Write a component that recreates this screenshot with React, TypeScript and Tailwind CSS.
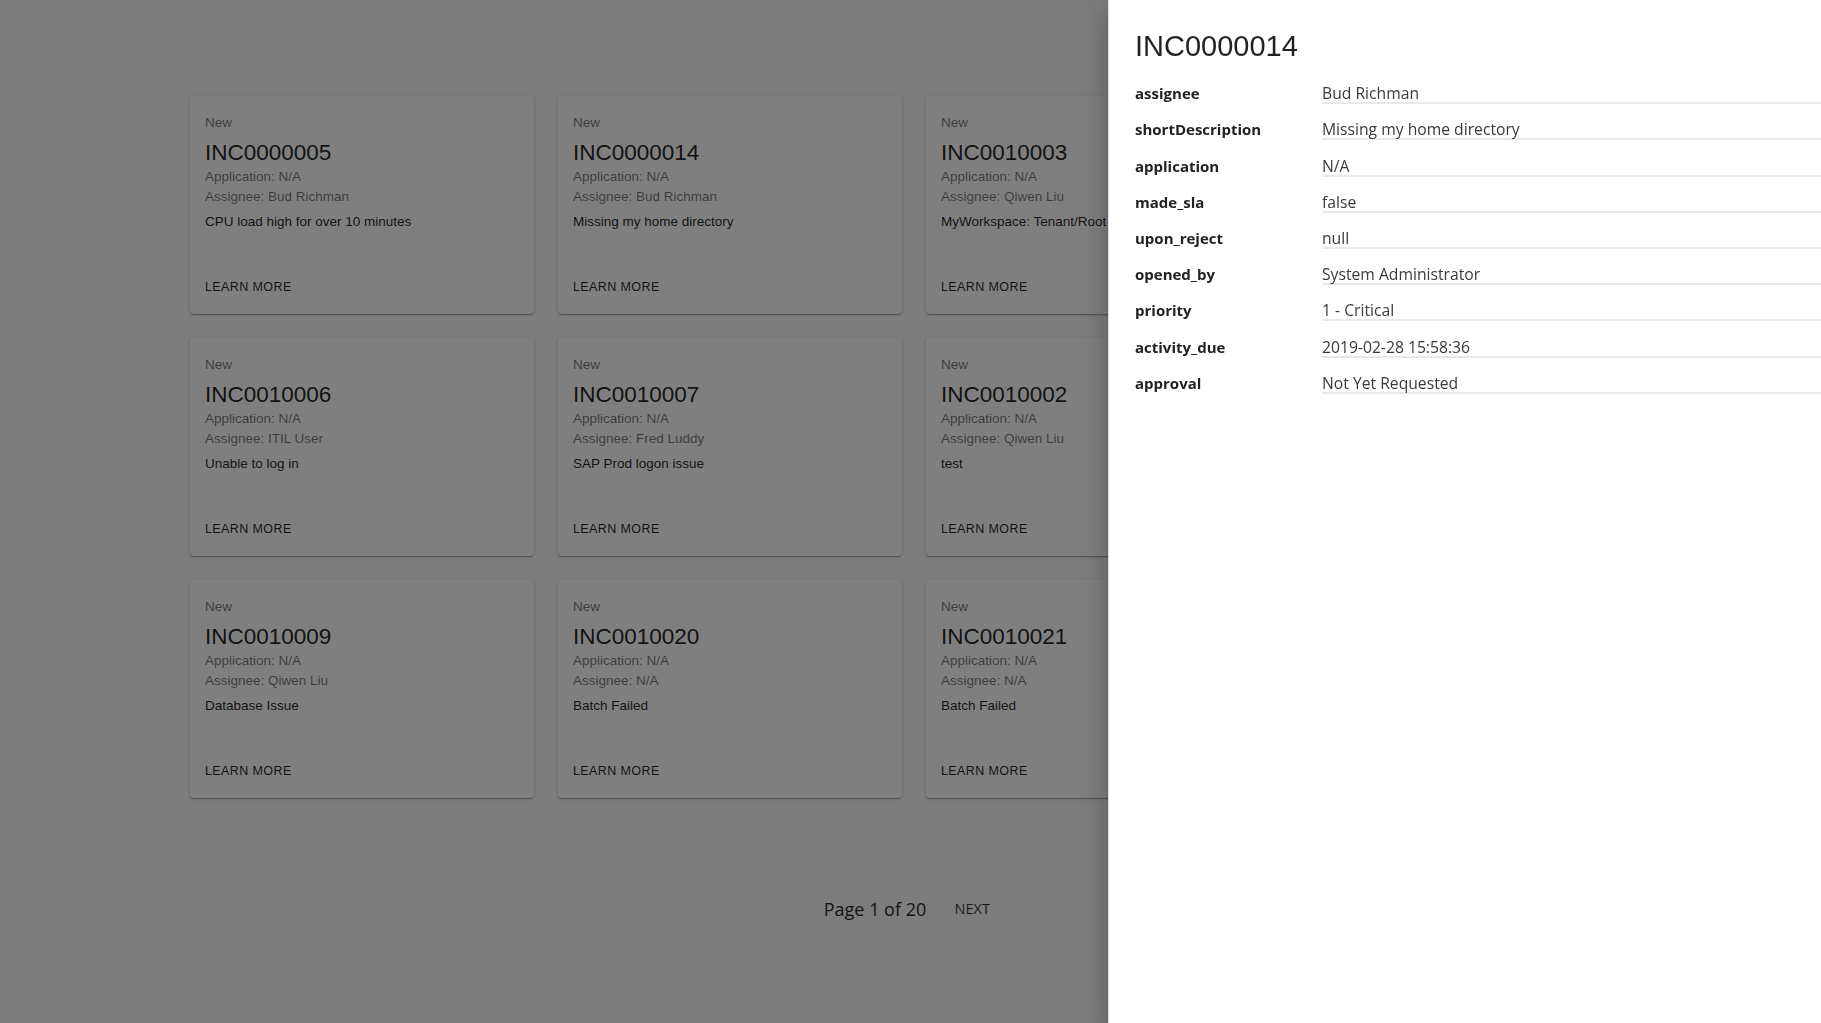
import React from "react";

type Incident = {
  id: string;
  application: string;
  assignee: string;
  description: string;
};

const incidents: Incident[] = [
  { id: "INC0000005", application: "N/A", assignee: "Bud Richman", description: "CPU load high for over 10 minutes" },
  { id: "INC0000014", application: "N/A", assignee: "Bud Richman", description: "Missing my home directory" },
  { id: "INC0010003", application: "N/A", assignee: "Qiwen Liu", description: "MyWorkspace: Tenant/Root not responding" },
  { id: "INC0010004", application: "N/A", assignee: "ITIL User", description: "Email server is down" },
  { id: "INC0010006", application: "N/A", assignee: "ITIL User", description: "Unable to log in" },
  { id: "INC0010007", application: "N/A", assignee: "Fred Luddy", description: "SAP Prod logon issue" },
  { id: "INC0010002", application: "N/A", assignee: "Qiwen Liu", description: "test" },
  { id: "INC0010008", application: "N/A", assignee: "Fred Luddy", description: "Network latency" },
  { id: "INC0010009", application: "N/A", assignee: "Qiwen Liu", description: "Database Issue" },
  { id: "INC0010020", application: "N/A", assignee: "N/A", description: "Batch Failed" },
  { id: "INC0010021", application: "N/A", assignee: "N/A", description: "Batch Failed" },
  { id: "INC0010022", application: "N/A", assignee: "N/A", description: "Batch Failed" },
];

const details: [string, string][] = [
  ["assignee", "Bud Richman"],
  ["shortDescription", "Missing my home directory"],
  ["application", "N/A"],
  ["made_sla", "false"],
  ["upon_reject", "null"],
  ["opened_by", "System Administrator"],
  ["priority", "1 - Critical"],
  ["activity_due", "2019-02-28 15:58:36"],
  ["approval", "Not Yet Requested"],
];

function IncidentCard({ item }: { item: Incident }) {
  return (
    <div className="h-[218px] bg-white rounded-[4px] shadow-[0_1px_3px_rgba(0,0,0,0.2),0_1px_1px_rgba(0,0,0,0.14),0_2px_1px_-1px_rgba(0,0,0,0.12)] flex flex-col overflow-hidden">
      <div className="pl-[15px] pr-4 pt-[17px]">
        <div className="text-[13.5px] leading-[20px] text-[rgba(0,0,0,0.54)]">New</div>
        <div className="mt-[6px] text-[22.5px] leading-[28px] text-[rgba(0,0,0,0.87)]">{item.id}</div>
        <div className="text-[13.5px] leading-[20px] text-[rgba(0,0,0,0.54)]">Application: {item.application}</div>
        <div className="text-[13.5px] leading-[20px] text-[rgba(0,0,0,0.54)]">Assignee: {item.assignee}</div>
        <div className="mt-[5px] text-[13.5px] leading-[20px] text-[rgba(0,0,0,0.87)] whitespace-nowrap">{item.description}</div>
      </div>
      <div className="mt-auto pl-[15px] pr-4 pb-[16px]">
        <button className="text-[12.5px] leading-[20px] tracking-[0.4px] uppercase text-[rgba(0,0,0,0.87)]">Learn More</button>
      </div>
    </div>
  );
}

export default function App() {
  return (
    <div className="relative min-h-screen bg-[#fafafa] font-['Liberation_Sans',Arial,sans-serif]">
      <div className="pl-[190px] pt-[96px]">
        <div className="w-[1448px] grid grid-cols-4 gap-x-[24px] gap-y-[24px]">
          {incidents.map((it) => (
            <IncidentCard key={it.id} item={it} />
          ))}
        </div>
        <div className="w-[1448px] mt-[99px] flex justify-center items-center font-['Open_Sans',sans-serif]">
          <span className="text-[18px] leading-[24px] text-[rgba(0,0,0,0.87)]">Page 1 of 20</span>
          <button className="ml-[14px] w-[64px] text-center text-[14.5px] leading-[24px] uppercase text-[rgba(0,0,0,0.8)]">Next</button>
        </div>
      </div>

      <div className="fixed inset-0 bg-[rgba(0,0,0,0.5)]" />

      <div className="fixed top-0 right-0 h-full w-[713px] bg-white border-l border-[#dedede] shadow-[0_8px_10px_-5px_rgba(0,0,0,0.2),0_16px_24px_2px_rgba(0,0,0,0.14),0_6px_30px_5px_rgba(0,0,0,0.12)]">
        <div className="pl-[26px] pt-[30px]">
          <h1 className="text-[29px] leading-[32px] font-normal text-[rgba(0,0,0,0.87)] font-['Liberation_Sans',Arial,sans-serif]">INC0000014</h1>
          <div className="mt-[6px] font-['Open_Sans',sans-serif]">
            {details.map(([k, v]) => (
              <div key={k} className="grid grid-cols-[187px_1fr] h-[36.2px] items-end">
                <div className="text-[15px] leading-[18px] font-bold text-[#222] pb-[2px]">{k}</div>
                <div className="text-[15.7px] leading-[18px] text-[#3a3a3a] border-b-2 border-[#e8e8e8]">{v}</div>
              </div>
            ))}
          </div>
        </div>
      </div>
    </div>
  );
}
